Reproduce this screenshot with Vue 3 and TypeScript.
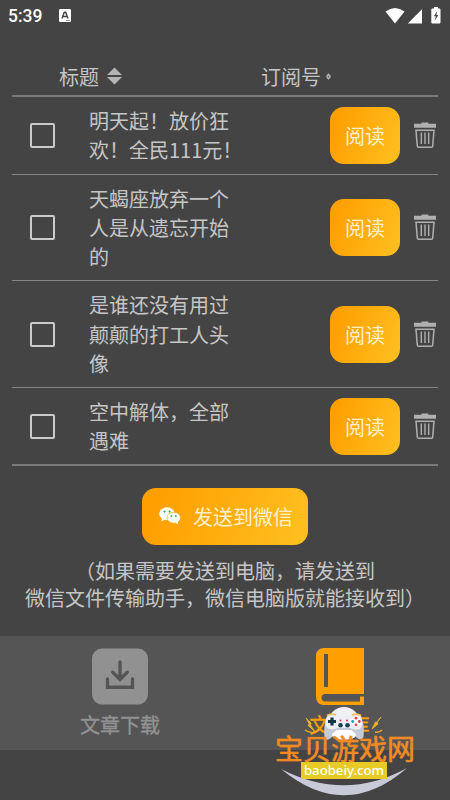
<script setup lang="ts">
interface Article {
  id: number
  lines: string[]
}

const articles: Article[] = [
  { id: 1, lines: ['明天起！放价狂', '欢！全民111元！'] },
  { id: 2, lines: ['天蝎座放弃一个', '人是从遗忘开始', '的'] },
  { id: 3, lines: ['是谁还没有用过', '颠颠的打工人头', '像'] },
  { id: 4, lines: ['空中解体，全部', '遇难'] },
]
</script>

<template>
  <div class="screen">
    <header class="status">
      <span class="clock">5:39</span>
      <svg class="app-badge" viewBox="0 0 12 13">
        <rect width="12" height="13" rx="1.3" fill="#fff" />
        <path d="M3 9.5 5.3 3.2h1.4L9 9.5M4 7.5h4" fill="none" stroke="#444" stroke-width="1.4" />
        <path d="M7 11.4h4" stroke="#777" stroke-width=".8" />
      </svg>
      <svg class="signals" viewBox="0 0 58 18">
        <path d="M.5 4.6Q10-2.6 19.5 4.6L10 16.5Z" fill="#fff" />
        <path d="M37 2.3V16.5H22.8Z" fill="#fff" />
        <path d="M49 1.5v-1.5h4v1.5h1.5q1 0 1 1v13q0 1-1 1h-7.2q-1 0-1-1v-13q0-1 1-1z" fill="#fff" />
        <path d="m52.3 4-3.5 5.2h2l-1 4.3 3.5-5.5h-2z" fill="#444" />
      </svg>
    </header>

    <div class="table">
      <div class="thead">
        <div class="col-title">
          <span>标题</span>
          <svg class="sort" viewBox="0 0 16 18">
            <path d="M8 0 16 8H0ZM0 10h16l-8 8Z" fill="#b5b5b5" />
          </svg>
        </div>
        <div class="col-source">
          <span>订阅号</span>
          <svg class="mini-sort" viewBox="0 0 5 6">
            <path d="M2.5 .6 4 2.3V3.7L2.5 5.4 1 3.7V2.3Z" fill="#777" stroke="#b5b5b5" stroke-width="1.2" />
          </svg>
        </div>
      </div>

      <div v-for="a in articles" :key="a.id" class="row" :class="{ tall: a.lines.length > 2 }">
        <span class="check"></span>
        <div class="title">
          <div v-for="line in a.lines" :key="line">{{ line }}</div>
        </div>
        <button class="read" type="button">阅读</button>
        <svg class="trash" viewBox="0 0 22 26">
          <path d="M0 1.7H7.5V.4h6.8V1.7H22v4H0Z" fill="#b0b0b0" />
          <path d="M2 8.3H20L18.7 24q-.1 1.2-1.3 1.2H4.6q-1.2 0-1.3-1.2Z" fill="none" stroke="#b0b0b0" stroke-width="1.5" />
          <path d="M7.3 10.5V22M11 10.5V22M14.7 10.5V22" stroke="#b0b0b0" stroke-width="1.4" />
        </svg>
      </div>
    </div>

    <button class="send" type="button">
      <svg class="wechat" viewBox="0 0 22 18">
        <ellipse cx="8" cy="6.7" rx="7.8" ry="6.4" fill="#fff" />
        <path d="m3 11-.8 3.5 4-2z" fill="#fff" />
        <ellipse cx="14.7" cy="10.7" rx="6.7" ry="5.5" fill="#fff" stroke="#ffb01c" stroke-width=".8" />
        <path d="m16 15.5 3.2 1.8-.5-3.5z" fill="#fff" />
        <g fill="#2ab54a">
          <circle cx="5.5" cy="4.6" r="1.1" />
          <circle cx="10.6" cy="4.6" r="1.1" />
          <circle cx="12.5" cy="9" r=".9" />
          <circle cx="16.8" cy="9" r=".9" />
        </g>
      </svg>
      <span>发送到微信</span>
    </button>

    <div class="hint">
      <div class="hint-first">（如果需要发送到电脑，请发送到</div>
      <div class="hint-second">微信文件传输助手，微信电脑版就能接收到）</div>
    </div>

    <nav class="tabs">
      <div class="tab">
        <svg class="tab-icon" viewBox="0 0 56 56">
          <rect width="56" height="56" rx="10" fill="#919191" />
          <path d="M28 13.5V30M20.8 23.8 28 31l7.2-7.2M15.5 30.5v8.3h25v-8.3" fill="none" stroke="#555" stroke-width="3.4" stroke-linecap="round" />
        </svg>
        <span>文章下载</span>
      </div>
      <div class="tab active">
        <svg class="tab-icon book" viewBox="0 0 48 57">
          <path fill-rule="evenodd" d="M7.5 0H48V46H8a4 4 0 0 0 0 7.5H44V48.5h4V57H7.5Q0 56 0 49V7.5Q0 1 7.5 0ZM8 6V39h4V6Z" fill="#ffa000" />
        </svg>
        <span>文章库</span>
      </div>
    </nav>

    <div class="watermark">
      <svg class="wm-art" viewBox="0 0 150 97">
        <path d="M11 69Q75 122 137 68Q75 102 11 69Z" fill="#c9cad8" />
        <circle cx="74" cy="23" r="16" fill="#f1f1f3" />
        <path d="M58 16Q64 13 70 17H78Q84 13 90 16Q95 23 93.5 37Q91 42 86 37L82 30H66L62 37Q57 42 54.5 38Q53 24 58 16Z" fill="#c5cad9" />
        <path d="M58 15Q65 12 70 16H78Q84 12 90 15Q94 22 91 28Q87 31 80 28H68Q60 31 56 27Q54 20 58 15Z" fill="#eceef4" />
        <ellipse cx="74" cy="35" rx="12" ry="5" fill="#fff" />
        <path d="M57 15.5q4-2.5 9-.5M82 15q5-2 9 .5" fill="none" stroke="#efbd55" stroke-width="1.8" />
        <path d="M62 17.5v8M58 21.5h8" stroke="#12384a" stroke-width="3.2" />
        <circle cx="70.5" cy="25.2" r="2.3" fill="#174158" />
        <circle cx="77.5" cy="25.2" r="2.3" fill="#174158" />
        <circle cx="70.5" cy="20.5" r="1" fill="#e63d4e" />
        <circle cx="77" cy="20.5" r="1" fill="#e63d4e" />
        <circle cx="86" cy="21.5" r="5" fill="#fff" />
        <circle cx="86" cy="18.2" r="1.4" fill="#e63d4e" />
        <circle cx="86" cy="24.8" r="1.4" fill="#e63d4e" />
        <circle cx="82.7" cy="21.5" r="1.4" fill="#2998bd" />
        <circle cx="89.3" cy="21.5" r="1.4" fill="#e63d4e" />
        <path d="m36 18 5 5-.5 2 4 6-6-5 .5-2.5ZM111 17l-4 5 1 2-6 5 3.5-7 1.5.5Z" fill="#f0b429" stroke="#f0b429" stroke-width=".8" />
        <path d="M35 30q5 4 13 1M112 30q-3 3-7 2" fill="none" stroke="#eda52a" stroke-width="1.3" />
      </svg>
      <div class="wm-name">宝贝游戏网</div>
      <div class="wm-site">baobeiy.com</div>
    </div>
  </div>
</template>

<style>
body { background: #444; overflow: hidden; }
</style>
<style scoped>
.screen {
  position: relative;
  display: flex;
  flex-direction: column;
  width: 450px;
  height: 800px;
  overflow: hidden;
  background: #444;
  font-family: "Noto Sans CJK SC", sans-serif;
  font-size: 20px;
  color: #c6c6c6;
}
svg { display: block; flex: none; }
button {
  border: 0;
  padding: 0;
  font: inherit;
  color: #fff0cd;
  background: linear-gradient(110deg, #ff9f00 10%, #ffc021 100%);
}
.status {
  display: flex;
  align-items: center;
  height: 31px;
  padding: 0 8px;
  color: #fff;
}
.clock {
  width: 51px;
  font-family: Roboto, sans-serif;
  font-weight: 500;
  font-size: 17.5px;
}
.app-badge { width: 12px; height: 13px; }
.signals { width: 58px; height: 18px; margin-left: auto; margin-right: -1px; }
.table { padding: 0 12px; }
.thead {
  display: flex;
  align-items: center;
  height: 64.3px;
  border-bottom: 2px solid #7a7a7a;
}
.thead > div { display: flex; align-items: center; margin-top: 26px; }
.col-title { width: 202px; padding-left: 47px; gap: 8px; }
.sort { width: 15px; height: 18px; }
.col-source { gap: 5px; }
.mini-sort { width: 5px; height: 7px; }
.row {
  display: flex;
  align-items: center;
  height: 76.3px;
  border-bottom: 1px solid #858585;
}
.row.tall { height: 105.8px; }
.row:last-child { height: 75.7px; border-bottom: 2px solid #7a7a7a; }
.check {
  width: 25px;
  height: 25px;
  margin-left: 18px;
  box-sizing: border-box;
  border: 2px solid #cacaca;
  border-radius: 2px;
}
.title { width: 241px; padding-left: 34px; line-height: 29.2px; white-space: nowrap; box-sizing: border-box; }
.read {
  width: 70px;
  height: 57px;
  margin-left: 34px;
  border-radius: 14px;
}
.trash { width: 22px; height: 26px; margin-left: 14px; }
.send {
  display: flex;
  align-items: center;
  align-self: center;
  width: 166px;
  height: 57px;
  margin-top: 22px;
  padding-left: 17px;
  gap: 12px;
  border-radius: 14px;
  flex: none;
}
.wechat { width: 22px; height: 18px; }
.hint { margin-top: 12px; line-height: 27px; white-space: nowrap; }
.hint-first { padding-left: 75px; }
.hint-second { padding-left: 25px; }
.tabs {
  display: flex;
  height: 114px;
  margin-top: 25px;
  padding: 0 5px 0 9px;
  background: #555;
}
.tab {
  display: flex;
  width: 50%;
  box-sizing: border-box;
  flex-direction: column;
  align-items: center;
  padding-top: 12px;
  -webkit-text-stroke: .4px currentColor;
  line-height: 30px;
  color: #919191;
}
.tab:first-child { padding-left: 4px; }
.tab-icon { width: 56px; height: 57px; margin-bottom: 5px; }
.book { width: 48px; }
.active { color: #ffa000; padding-left: 7px; }
.watermark {
  position: absolute;
  left: 270px;
  top: 700px;
  width: 150px;
  height: 100px;
}
.wm-art { position: absolute; left: 0; top: 0; width: 150px; height: 97px; }
.wm-name {
  position: absolute;
  left: 5px;
  top: 33px;
  font-size: 28px;
  line-height: 30px;
  font-weight: 400;
  color: #f28a20;
  -webkit-text-stroke: .3px #f28a20;
  text-shadow: 0 0 1px #b98a5c;
  white-space: nowrap;
}
.wm-site {
  position: absolute;
  left: 31px;
  top: 62px;
  width: 86px;
  height: 17px;
  background: #e8cb26;
  color: #fff;
  font-family: "Noto Sans", sans-serif;
  font-weight: 500;
  font-size: 13.2px;
  line-height: 16px;
  text-align: center;
}
</style>
